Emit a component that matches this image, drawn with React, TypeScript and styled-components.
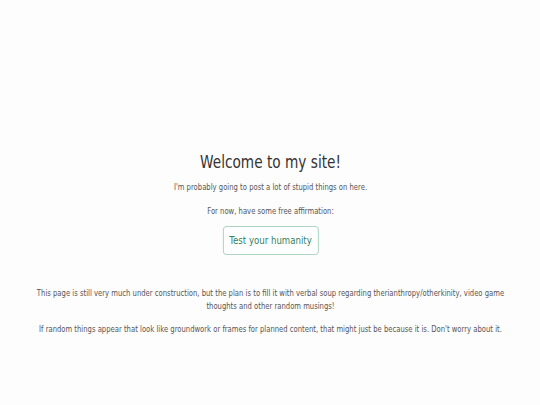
import React from 'react';
import styled, { createGlobalStyle } from 'styled-components';

const GlobalStyle = createGlobalStyle`
  html, body {
    margin: 0;
    padding: 0;
    background: #fdfdfd;
  }
  body {
    font-family: 'DejaVu Sans', Verdana, sans-serif;
    color: #444;
  }
`;

const Page = styled.main`
  width: 540px;
  height: 405px;
  overflow: hidden;
  display: flex;
  justify-content: center;
`;

// the site's face is a narrow one; squeeze the column to match it
const Column = styled.div`
  flex: 0 0 711px;
  display: flex;
  flex-direction: column;
  align-items: center;
  padding-top: 150px;
  transform: scaleX(0.76);
  transform-origin: top center;
`;

const Title = styled.h1`
  font-size: 18px;
  line-height: 24px;
  font-weight: 400;
  color: #333;
  margin: 0 0 7px 0;
`;

const Line = styled.p<{ $gap?: number }>`
  font-size: 9px;
  line-height: 13px;
  margin: 0 0 ${(p) => p.$gap ?? 11}px 0;
  text-align: center;
  color: #555;
`;

const Button = styled.button`
  font-family: inherit;
  font-size: 11.3px;
  color: #32805f;
  background: #fff;
  border: 1px solid #9fcfb9;
  border-radius: 4px;
  width: 126px;
  height: 29px;
  padding: 0;
  margin: 3px 0 32px 0;
`;

const Notes = styled.div`
  width: 640px;
`;

export default function App() {
  return (
    <>
      <GlobalStyle />
      <Page>
        <Column>
          <Title>Welcome to my site!</Title>
          <Line>I'm probably going to post a lot of stupid things on here.</Line>
          <Line $gap={5}>For now, have some free affirmation:</Line>
          <Button>Test your humanity</Button>
          <Notes>
            <Line $gap={10}>
              This page is still very much under construction, but the plan is to fill it with verbal soup regarding
              therianthropy/otherkinity, video game thoughts and other random musings!
            </Line>
            <Line>
              If random things appear that look like groundwork or frames for planned content, that might just be
              because it is. Don't worry about it.
            </Line>
          </Notes>
        </Column>
      </Page>
    </>
  );
}
